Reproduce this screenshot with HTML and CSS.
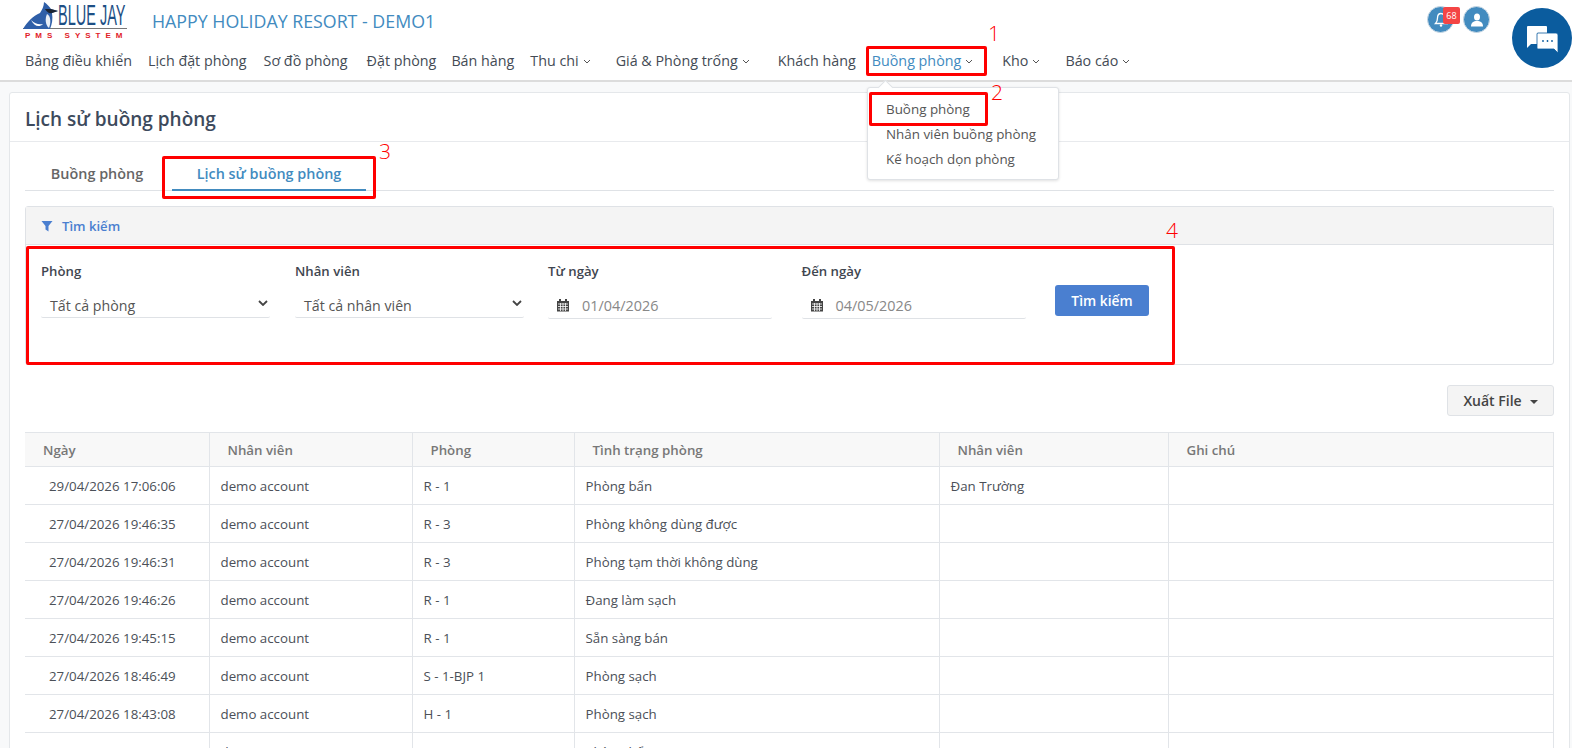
FILE: index.html
```html
<!DOCTYPE html>
<html lang="vi">
<head>
    <meta charset="UTF-8">
    <title>Lịch sử buồng phòng</title>
    <link rel="stylesheet" href="styles.css">
</head>
<body>
    <header class="top-header">
        <div class="brand-row">
            <div class="logo">
                <svg class="logo-bird" viewBox="0 0 36 28" width="36" height="28">
                    <path d="M0 28 C4 21 10 15 17 12 C19 9 21 5 21 1 C24 3 26 5 28 8 L35 10 L29 12 C30 18 29 23 27 28 Z" fill="#2f5fa8"/>
                    <path d="M22 8 L28 8 L35 10 L29 12 C26 13 24 11 22 8 Z" fill="#1b2433"/>
                    <path d="M24 13 C28 15 28 22 26 27 C22 24 22 17 24 13 Z" fill="#e8eef6"/>
                    <path d="M8 19 C12 23 16 24 20 23 C16 27 11 25 8 19 Z" fill="#ffffff"/>
                </svg>
                <div class="logo-name"><span>BLUE JAY</span></div>
                <div class="logo-sub">PMS SYSTEM</div>
            </div>
            <div class="hotel-name">HAPPY HOLIDAY RESORT - DEMO1</div>
            <div class="header-icons">
                <div class="round-icon bell-icon">
                    <svg viewBox="0 0 16 16" width="16" height="16"><path d="M8 1.5 C5.5 1.5 4.5 3.5 4.5 6 C4.5 9 3.5 10.5 2.5 11.5 L13.5 11.5 C12.5 10.5 11.5 9 11.5 6 C11.5 3.5 10.5 1.5 8 1.5 Z" fill="none" stroke="#fff" stroke-width="1.3"/><circle cx="8" cy="13.5" r="1.2" fill="#fff"/></svg>
                    <span class="badge">68</span>
                </div>
                <div class="round-icon user-icon">
                    <svg viewBox="0 0 16 16" width="16" height="16"><ellipse cx="8" cy="5" rx="3" ry="3.6" fill="#fff"/><path d="M2 14.5 C2 10.5 4.5 9 8 9 C11.5 9 14 10.5 14 14.5 Z" fill="#fff"/></svg>
                </div>
            </div>
        </div>
        <nav class="main-nav">
            <a href="#" class="nav-item nav-bang">Bảng điều khiển</a>
            <a href="#" class="nav-item">Lịch đặt phòng</a>
            <a href="#" class="nav-item nav-so">Sơ đồ phòng</a>
            <a href="#" class="nav-item nav-dat">Đặt phòng</a>
            <a href="#" class="nav-item nav-ban">Bán hàng</a>
            <a href="#" class="nav-item nav-thu">Thu chi<svg class="chev" viewBox="0 0 8 5"><path d="M1 1 L4 4 L7 1"/></svg></a>
            <a href="#" class="nav-item nav-gia">Giá &amp; Phòng trống<svg class="chev" viewBox="0 0 8 5"><path d="M1 1 L4 4 L7 1"/></svg></a>
            <a href="#" class="nav-item nav-khach">Khách hàng</a>
            <a href="#" class="nav-item active nav-buong">Buồng phòng<svg class="chev" viewBox="0 0 8 5"><path d="M1 1 L4 4 L7 1"/></svg></a>
            <a href="#" class="nav-item nav-kho">Kho<svg class="chev" viewBox="0 0 8 5"><path d="M1 1 L4 4 L7 1"/></svg></a>
            <a href="#" class="nav-item">Báo cáo<svg class="chev" viewBox="0 0 8 5"><path d="M1 1 L4 4 L7 1"/></svg></a>
        </nav>
    </header>

    <main class="page">
        <section class="card">
            <h1 class="card-title">Lịch sử buồng phòng</h1>
            <div class="card-body">
                <div class="tabs">
                    <a href="#" class="tab tab-first">Buồng phòng</a>
                    <a href="#" class="tab active">Lịch sử buồng phòng</a>
                </div>

                <div class="filter-box">
                    <div class="filter-head">
                        <svg viewBox="0 0 12 12" width="12" height="12"><path d="M0.5 1 L11.5 1 L7.5 6 L7.5 11.5 L4.5 9.5 L4.5 6 Z" fill="#4a7fd0"/></svg>
                        <span>Tìm kiếm</span>
                    </div>
                    <div class="filter-body">
                        <div class="field field-select field-first">
                            <label>Phòng</label>
                            <div class="input-line">Tất cả phòng<svg class="select-arrow" viewBox="0 0 10 6"><path d="M1 1 L5 5 L9 1"/></svg></div>
                        </div>
                        <div class="field field-select">
                            <label>Nhân viên</label>
                            <div class="input-line">Tất cả nhân viên<svg class="select-arrow" viewBox="0 0 10 6"><path d="M1 1 L5 5 L9 1"/></svg></div>
                        </div>
                        <div class="field field-date">
                            <label>Từ ngày</label>
                            <div class="input-line date-line">
                                <svg class="cal" viewBox="0 0 14 14"><path d="M1 3 H13 V13.5 H1 Z M3 1 H5 V4 H3 Z M9 1 H11 V4 H9 Z" fill="#444"/><path d="M2 6 H12 M2 8.5 H12 M2 11 H12 M4.5 5 V13 M7 5 V13 M9.5 5 V13" stroke="#fff" stroke-width="0.8"/></svg>
                                01/04/2026
                            </div>
                        </div>
                        <div class="field field-date">
                            <label>Đến ngày</label>
                            <div class="input-line date-line">
                                <svg class="cal" viewBox="0 0 14 14"><path d="M1 3 H13 V13.5 H1 Z M3 1 H5 V4 H3 Z M9 1 H11 V4 H9 Z" fill="#444"/><path d="M2 6 H12 M2 8.5 H12 M2 11 H12 M4.5 5 V13 M7 5 V13 M9.5 5 V13" stroke="#fff" stroke-width="0.8"/></svg>
                                04/05/2026
                            </div>
                        </div>
                        <button class="search-button">Tìm kiếm</button>
                    </div>
                </div>

                <div class="export-row">
                    <button class="export-button">Xuất File<span class="caret"></span></button>
                </div>

                <table class="history-table">
                    <thead>
                        <tr>
                            <th class="col-date">Ngày</th>
                            <th class="col-user">Nhân viên</th>
                            <th class="col-room">Phòng</th>
                            <th class="col-status">Tình trạng phòng</th>
                            <th class="col-staff">Nhân viên</th>
                            <th>Ghi chú</th>
                        </tr>
                    </thead>
                    <tbody>
                        <tr><td>29/04/2026 17:06:06</td><td>demo account</td><td>R - 1</td><td>Phòng bẩn</td><td>Đan Trường</td><td></td></tr>
                        <tr><td>27/04/2026 19:46:35</td><td>demo account</td><td>R - 3</td><td>Phòng không dùng được</td><td></td><td></td></tr>
                        <tr><td>27/04/2026 19:46:31</td><td>demo account</td><td>R - 3</td><td>Phòng tạm thời không dùng</td><td></td><td></td></tr>
                        <tr><td>27/04/2026 19:46:26</td><td>demo account</td><td>R - 1</td><td>Đang làm sạch</td><td></td><td></td></tr>
                        <tr><td>27/04/2026 19:45:15</td><td>demo account</td><td>R - 1</td><td>Sẵn sàng bán</td><td></td><td></td></tr>
                        <tr><td>27/04/2026 18:46:49</td><td>demo account</td><td>S - 1-BJP 1</td><td>Phòng sạch</td><td></td><td></td></tr>
                        <tr><td>27/04/2026 18:43:08</td><td>demo account</td><td>H - 1</td><td>Phòng sạch</td><td></td><td></td></tr>
                        <tr><td>24/04/2026 11:33:36</td><td>demo account</td><td>R - 1</td><td>Phòng bẩn</td><td></td><td></td></tr>
                    </tbody>
                </table>
            </div>
        </section>
    </main>

    <!-- Menu dang mo -->
    <div class="dropdown">
        <a href="#">Buồng phòng</a>
        <a href="#">Nhân viên buồng phòng</a>
        <a href="#">Kế hoạch dọn phòng</a>
    </div>

    <div class="chat-bubble">
        <svg viewBox="0 0 31 27" width="31" height="27">
            <path d="M1 0 H19 Q20 0 20 1 V7 H10 V18 L4 18 L0 22 V1 Q0 0 1 0 Z" fill="#fff"/>
            <path d="M11 7 H29 Q31 7 31 9 V27 L27 23 H11 Q10 23 10 22 V8 Q10 7 11 7 Z" fill="#fff" stroke="#0b5c9e" stroke-width="0.8"/>
            <circle cx="16" cy="15" r="0.9" fill="#0b5c9e"/><circle cx="20.5" cy="15" r="0.9" fill="#0b5c9e"/><circle cx="25" cy="15" r="0.9" fill="#0b5c9e"/>
        </svg>
    </div>

    <!-- Khung do chu thich tren anh -->
    <div class="mark mark-1"></div>
    <div class="mark mark-2"></div>
    <div class="mark mark-3"></div>
    <div class="mark mark-4"></div>
    <span class="mark-num num-1">1</span>
    <span class="mark-num num-2">2</span>
    <span class="mark-num num-3">3</span>
    <span class="mark-num num-4">4</span>
</body>
</html>
```

FILE: styles.css
```css
/* Trang lich su buong phong */
* {
    box-sizing: border-box;
}

html, body {
    height: 100%;
}

body {
    margin: 0;
    overflow: hidden;
    position: relative;
    font-family: "Open Sans", "Noto Sans", sans-serif;
    font-size: 13px;
    color: #3f4650;
    background-color: #f8f9fa;
}

a {
    text-decoration: none;
    color: inherit;
}

/* Header */
.top-header {
    height: 82px;
    background-color: #fff;
    border-bottom: 2px solid #dcdcdc;
}

.brand-row {
    height: 41px;
    display: flex;
    align-items: flex-start;
    padding: 0 0 0 23px;
}

.logo {
    position: relative;
    width: 129px;
    flex-shrink: 0;
}

.logo-bird {
    position: absolute;
    left: 0;
    top: 1px;
}

.logo-name {
    height: 29px;
    padding: 3px 0 0 35px;
    font-family: "Liberation Sans", sans-serif;
    font-size: 29px;
    line-height: 25px;
    color: #1d4f85;
    white-space: nowrap;
    border-bottom: 1px solid #777;
    width: 104px;
}

.logo-name span {
    display: inline-block;
    transform: scaleX(0.5);
    transform-origin: left center;
}

.logo-sub {
    margin-top: 2px;
    padding-left: 2px;
    font-family: "Liberation Sans", sans-serif;
    font-size: 8px;
    line-height: 9px;
    font-weight: bold;
    letter-spacing: 5px;
    color: #e1222a;
    white-space: nowrap;
}

.hotel-name {
    margin-top: 9px;
    font-size: 17.8px;
    line-height: 24px;
    color: #428bbf;
    white-space: nowrap;
}

.header-icons {
    margin-left: auto;
    margin-right: 82px;
    margin-top: 6px;
    display: flex;
    gap: 9px;
}

.round-icon {
    position: relative;
    width: 27px;
    height: 27px;
    border-radius: 50%;
    background-color: #428bbf;
    border: 1px solid #c9d8e4;
    display: flex;
    align-items: center;
    justify-content: center;
}

.badge {
    position: absolute;
    left: 15px;
    top: 0;
    width: 17px;
    height: 17px;
    border-radius: 2px;
    background-color: #f44545;
    color: #fff;
    font-size: 9px;
    line-height: 17px;
    text-align: center;
}

.main-nav {
    display: flex;
    padding-left: 25px;
    height: 38px;
    align-items: center;
    font-size: 14.3px;
    color: #444b55;
}

.nav-item {
    margin-right: 17px;
    white-space: nowrap;
}

.nav-item.active {
    color: #428bbf;
    font-weight: 500;
}

.nav-bang { margin-right: 16px; }
.nav-so { margin-right: 19px; }
.nav-dat { margin-right: 15px; }
.nav-ban { margin-right: 16px; }
.nav-thu { margin-right: 25px; }
.nav-gia { margin-right: 28px; }
.nav-khach { margin-right: 16px; }
.nav-buong { margin-right: 29px; }
.nav-kho { margin-right: 25px; }

.chev {
    width: 8px;
    height: 5px;
    margin-left: 4px;
    vertical-align: 2px;
    fill: none;
    stroke: #555;
    stroke-width: 1;
}

/* Card chinh */
.page {
    padding: 10px 2px 0 9px;
}

.card {
    background-color: #fff;
    border: 1px solid #e4e7ea;
    border-radius: 3px;
}

.card-title {
    margin: 0;
    height: 49px;
    padding: 0 15px;
    font-size: 19px;
    font-weight: 600;
    line-height: 52px;
    color: #3d4a5c;
    border-bottom: 1px solid #e8eaed;
}

.card-body {
    padding: 15px 15px 0;
}

.tabs {
    display: flex;
    height: 34px;
    border-bottom: 1px solid #dfe2e6;
}

.tab {
    font-size: 14.4px;
    font-weight: 600;
    line-height: 33px;
    color: #666;
    text-align: center;
}

.tab-first {
    width: 147px;
    padding-right: 3px;
}

.tab.active {
    width: 194px;
    color: #428bbf;
    border-bottom: 2px solid #428bbf;
    height: 34px;
}

/* Bo loc */
.filter-box {
    margin-top: 15px;
    height: 159px;
    border: 1px solid #dfe2e6;
    border-radius: 3px;
}

.filter-head {
    height: 38px;
    padding-top: 1px;
    background-color: #f4f4f4;
    border-bottom: 1px solid #dfe2e6;
    display: flex;
    align-items: center;
    gap: 9px;
    padding-left: 15px;
    font-weight: 600;
    font-size: 13.1px;
    color: #4a7fd0;
}

.filter-body {
    display: flex;
    padding: 17px 0 0 15px;
}

.field label {
    display: block;
    font-size: 13.2px;
    font-weight: 600;
    line-height: 18px;
    color: #3f4650;
}

.field-select {
    width: 253px;
}

.field-first {
    width: 254px;
}

.field-date {
    width: 253.5px;
}

.input-line {
    position: relative;
    margin-top: 13px;
    height: 25px;
    width: 229px;
    padding-left: 9px;
    font-size: 14.2px;
    line-height: 26px;
    color: #555;
    border-bottom: 1px solid #dfe2e6;
    border-radius: 2px;
}

.date-line {
    width: 224px;
    height: 26px;
    padding-left: 34px;
    font-size: 14.4px;
    color: #888;
}

.select-arrow {
    position: absolute;
    right: 2px;
    top: 7px;
    width: 10px;
    height: 6px;
    fill: none;
    stroke: #444;
    stroke-width: 1.8;
}

.cal {
    position: absolute;
    left: 8px;
    top: 5px;
    width: 14px;
    height: 14px;
}

.search-button {
    align-self: flex-start;
    margin-top: 23px;
    width: 94px;
    height: 31px;
    background-color: #4a7fd0;
    color: #fff;
    border: none;
    border-radius: 3px;
    font-family: inherit;
    font-size: 13.8px;
    font-weight: 600;
}

.export-row {
    display: flex;
    justify-content: flex-end;
    margin-top: 20px;
}

.export-button {
    width: 107px;
    height: 31px;
    background-color: #f4f4f4;
    color: #444;
    border: 1px solid #dfe2e6;
    border-radius: 3px;
    font-family: inherit;
    font-size: 14px;
    font-weight: 600;
}

.caret {
    display: inline-block;
    margin-left: 8px;
    vertical-align: 2px;
    border-top: 4px solid #444;
    border-left: 4px solid transparent;
    border-right: 4px solid transparent;
}

/* Bang */
.history-table {
    margin-top: 16px;
    width: 100%;
    table-layout: fixed;
    border-collapse: collapse;
    font-size: 13.3px;
}

.history-table th,
.history-table td {
    border: 1px solid #e2e5e9;
}

.history-table th {
    height: 34px;
    padding: 0 0 0 18px;
    text-align: left;
    font-weight: 600;
    color: #777;
    background-color: #f8f8f8;
}

.history-table td {
    height: 38px;
    padding: 0 0 0 11px;
    color: #4b5058;
}

.history-table td:first-child {
    padding-left: 24px;
}

.history-table th:first-child,
.history-table td:first-child {
    border-left: none;
}

.col-date { width: 184px; }
.col-user { width: 203px; }
.col-room { width: 162px; }
.col-status { width: 365px; }
.col-staff { width: 229px; }

/* Menu dang mo */
.dropdown {
    position: absolute;
    left: 867px;
    top: 87px;
    width: 192px;
    height: 93px;
    padding-top: 9px;
    background-color: #fff;
    border: 1px solid #dfe2e6;
    border-radius: 3px;
    box-shadow: 0 1px 3px rgba(0, 0, 0, 0.12);
    font-size: 13.4px;
    color: #555;
}

.dropdown::before {
    content: "";
    position: absolute;
    left: 12px;
    top: -6px;
    width: 10px;
    height: 10px;
    background-color: #fff;
    border-left: 1px solid #dfe2e6;
    border-top: 1px solid #dfe2e6;
    transform: rotate(45deg);
}

.dropdown a {
    display: block;
    height: 25px;
    line-height: 25px;
    padding-left: 18px;
}

.chat-bubble {
    position: absolute;
    left: 1512px;
    top: 8px;
    width: 60px;
    height: 60px;
    padding-top: 3px;
    border-radius: 50%;
    background-color: #0b5c9e;
    display: flex;
    align-items: center;
    justify-content: center;
}

/* Khung do chu thich */
.mark {
    position: absolute;
    border: 3px solid #f00;
    border-radius: 2px;
}

.mark-1 { left: 866px; top: 46px; width: 121px; height: 30px; }
.mark-2 { left: 869px; top: 92px; width: 119px; height: 34px; }
.mark-3 { left: 162px; top: 156px; width: 214px; height: 43px; }
.mark-4 { left: 26px; top: 246px; width: 1149px; height: 119px; }

.mark-num {
    position: absolute;
    font-family: "Open Sans", sans-serif;
    font-weight: 300;
    font-size: 21px;
    line-height: 20px;
    color: #f00;
}

.num-1 { left: 988px; top: 23px; }
.num-2 { left: 991px; top: 82px; }
.num-3 { left: 379px; top: 141px; }
.num-4 { left: 1166px; top: 220px; }
```
